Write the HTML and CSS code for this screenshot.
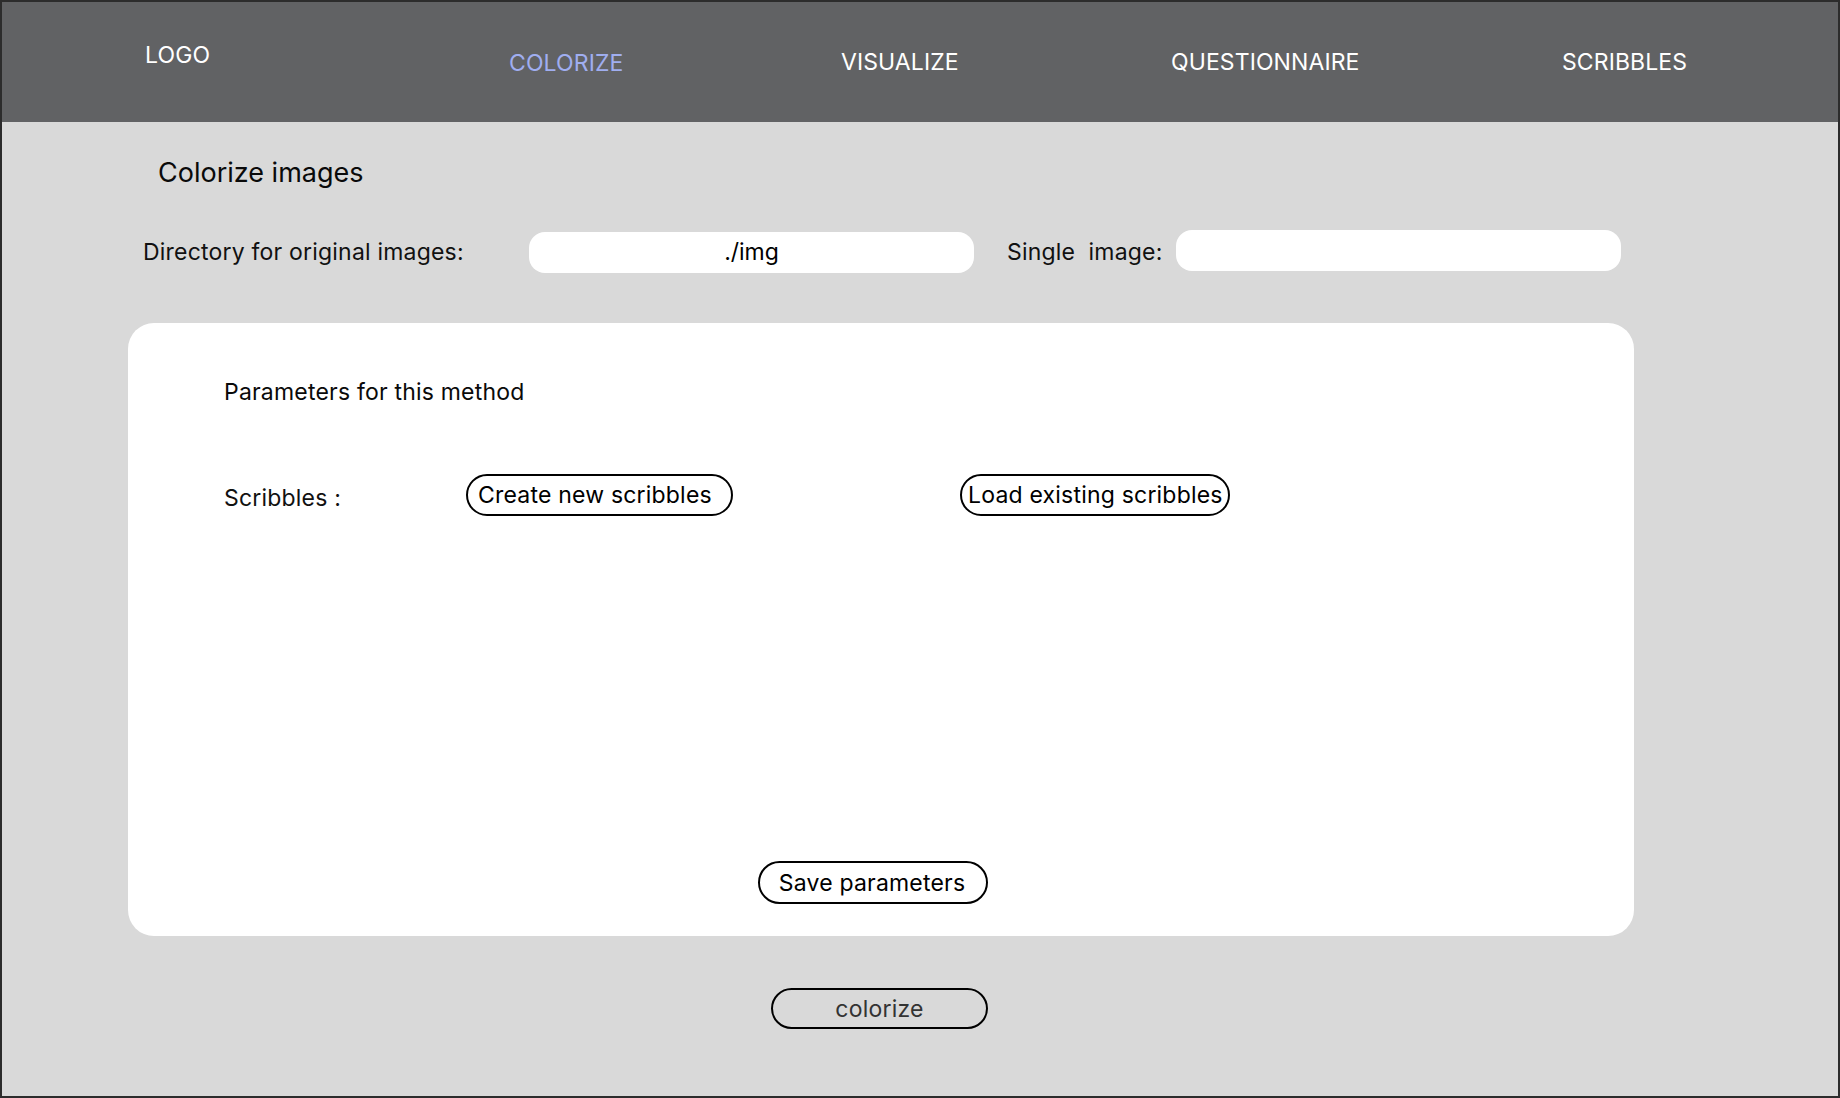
FILE: index.html
```html
<!DOCTYPE html>
<html lang="en">
<head>
<meta charset="utf-8">
<title>Colorize images</title>
<link rel="stylesheet" href="styles.css">
</head>
<body>
<div class="page">
  <header class="topbar">
    <nav class="nav">
      <span class="nav-item logo">LOGO</span>
      <span class="nav-item active">COLORIZE</span>
      <span class="nav-item">VISUALIZE</span>
      <span class="nav-item">QUESTIONNAIRE</span>
      <span class="nav-item">SCRIBBLES</span>
    </nav>
  </header>
  <main class="content">
    <h1 class="title">Colorize images</h1>
    <div class="dir-row">
      <span class="label dir-label">Directory for original images:</span>
      <div class="field field-dir">./img</div>
      <span class="label single-label">Single  image:</span>
      <div class="field field-single"></div>
    </div>
    <section class="panel">
      <h2 class="panel-title">Parameters for this method</h2>
      <div class="scribble-row">
        <span class="label scribble-label">Scribbles :</span>
        <button class="pill btn-create">Create new scribbles</button>
        <button class="pill btn-load">Load existing scribbles</button>
      </div>
      <button class="pill btn-save">Save parameters</button>
    </section>
    <button class="pill btn-colorize">colorize</button>
  </main>
</div>
</body>
</html>
```

FILE: styles.css
```css
html, body {
  margin: 0;
  padding: 0;
}

body {
  font-family: Inter, "Noto Sans", "Liberation Sans", sans-serif;
  color: #000;
}

.page {
  box-sizing: border-box;
  width: 1840px;
  height: 1098px;
  border: 2px solid #2c2c2c;
  background: #d9d9d9;
  display: flex;
  flex-direction: column;
  overflow: hidden;
}

.topbar {
  height: 120px;
  background: #616264;
  box-sizing: border-box;
  padding-top: 39px;
  padding-left: 143px;
}

.nav {
  display: grid;
  grid-template-columns: 364px 332px 330px 391px auto;
  align-items: start;
}

.nav-item {
  font-size: 23px;
  line-height: 28px;
  color: #ffffff;
  margin-top: 7px;
  letter-spacing: 0.1px;
}

.nav-item.logo {
  margin-top: 0;
}

.nav-item.active {
  color: #a0aef0;
  margin-top: 8px;
}

.content {
  display: flex;
  flex-direction: column;
  align-items: flex-start;
}

.title {
  margin: 34px 0 0 156px;
  font-size: 27px;
  line-height: 33px;
  font-weight: 400;
  color: #0a0a0a;
}

.dir-row {
  margin-top: 43px;
  margin-left: 141px;
  display: flex;
  align-items: center;
  height: 41px;
}

.label {
  font-size: 23px;
  line-height: 27px;
  letter-spacing: 0.2px;
  color: #111;
}

.dir-label {
  width: 386px;
}

.single-label {
  white-space: pre;
  margin-left: 33px;
  width: 169px;
}

.field {
  box-sizing: border-box;
  width: 445px;
  height: 41px;
  background: #ffffff;
  border-radius: 16px;
  font-size: 23px;
  line-height: 41px;
  text-align: center;
  color: #000;
}

.field-single {
  margin-bottom: 4px;
}

.panel {
  box-sizing: border-box;
  margin-top: 50px;
  margin-left: 126px;
  width: 1506px;
  height: 613px;
  background: #ffffff;
  border-radius: 26px;
  display: flex;
  flex-direction: column;
  align-items: flex-start;
  padding: 56px 0 32px 96px;
}

.panel-title {
  margin: 0;
  font-size: 23px;
  line-height: 27px;
  letter-spacing: 0.2px;
  font-weight: 400;
  color: #0a0a0a;
}

.scribble-row {
  margin-top: 68px;
  display: flex;
  align-items: center;
  height: 42px;
}

.scribble-label {
  width: 242px;
  margin-top: 6px;
}

.pill {
  box-sizing: border-box;
  font-family: Inter, "Noto Sans", "Liberation Sans", sans-serif;
  font-size: 23px;
  line-height: 26px;
  letter-spacing: 0.2px;
  color: #000;
  background: transparent;
  border: 2px solid #000;
  border-radius: 22px;
  padding: 0;
  cursor: pointer;
  white-space: nowrap;
}

.btn-create {
  width: 267px;
  height: 42px;
  text-align: left;
  padding-left: 10px;
}

.btn-load {
  width: 270px;
  height: 42px;
  margin-left: 227px;
  text-align: left;
  padding-left: 6px;
}

.btn-save {
  margin-top: auto;
  margin-left: 534px;
  width: 230px;
  height: 43px;
  text-align: center;
  padding-right: 2px;
}

.btn-colorize {
  margin-top: 52px;
  margin-left: 769px;
  width: 217px;
  height: 41px;
  color: #333;
  text-align: center;
}
```
